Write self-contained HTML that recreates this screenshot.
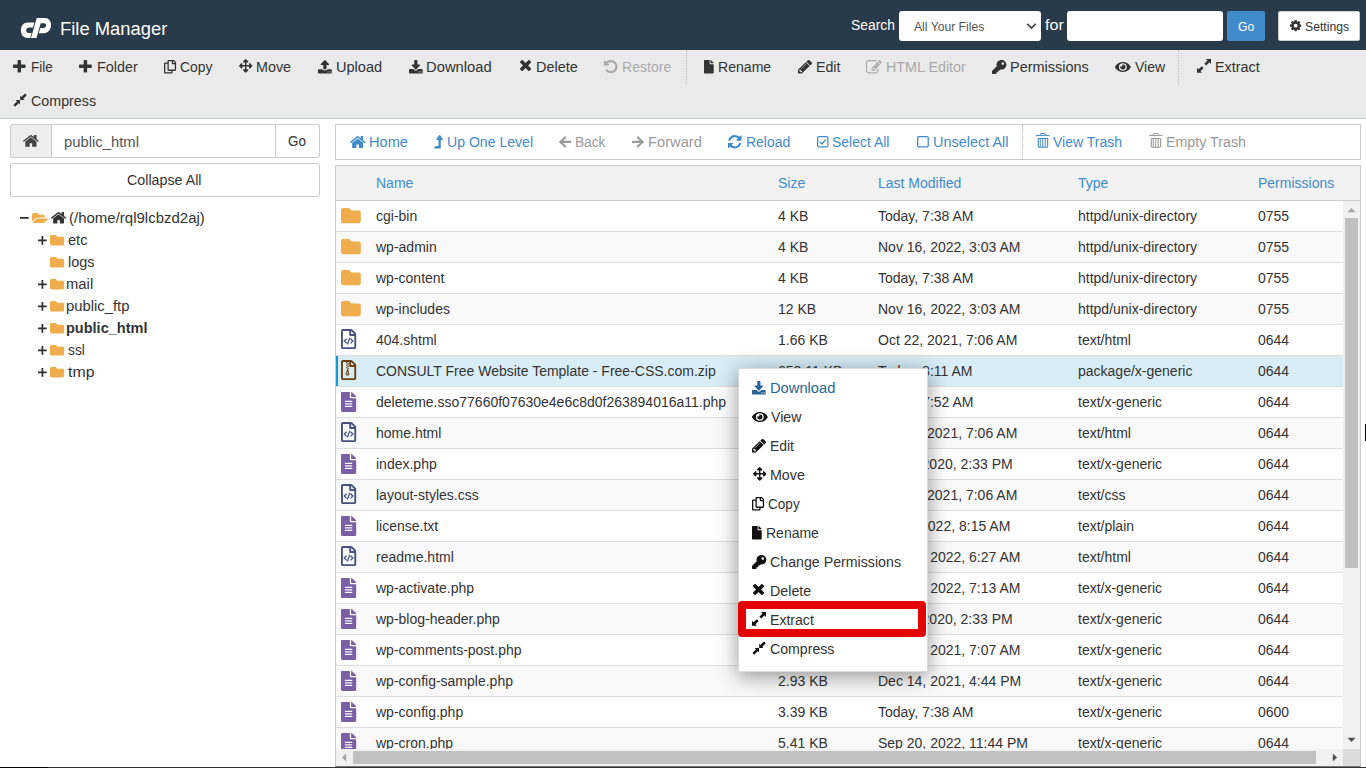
<!DOCTYPE html>
<html lang="en"><head><meta charset="utf-8"><title>cPanel File Manager</title>
<style>
html,body{margin:0;padding:0;}
body{width:1366px;height:768px;overflow:hidden;position:relative;background:#fff;font-family:"Liberation Sans",sans-serif;font-size:14px;color:#333;}
.a{position:absolute;box-sizing:border-box;}
.t{position:absolute;white-space:nowrap;line-height:20px;transform-origin:0 50%;display:block;}
svg{position:absolute;overflow:visible;}
.row{position:absolute;left:336px;width:1007px;height:30px;}
.row span{position:absolute;top:5px;line-height:20px;white-space:nowrap;font-size:14px;color:#333;}
.hd span{position:absolute;line-height:20px;white-space:nowrap;font-size:14px;color:#428bca;top:7px;}
</style></head><body>

<div class="a" style="left:0;top:0;width:1366px;height:50px;background:#293a4a"></div>
<div class="a" style="left:0;top:50px;width:1366px;height:69px;background:#eaeaea;border-bottom:1px solid #c0c8d0"></div>
<div class="a" style="left:686px;top:50px;width:0;height:34px;border-left:1px dotted #bbb"></div>
<div class="a" style="left:1178px;top:50px;width:0;height:34px;border-left:1px dotted #bbb"></div>
<div class="a" style="left:899px;top:11px;width:142px;height:30px;background:#fff;border-radius:3px"></div>
<svg style="left:1026px;top:22px" width="11" height="9" viewBox="0 0 11 9"><path d="M1.3 1.8 L5.5 6 L9.7 1.8" fill="none" stroke="#444" stroke-width="1.7"/></svg>
<div class="a" style="left:1067px;top:11px;width:156px;height:30px;background:#fff;border-radius:3px"></div>
<div class="a" style="left:1227px;top:11px;width:38px;height:30px;background:#428bca;border-radius:2px"></div>
<div class="a" style="left:1278px;top:11px;width:82px;height:30px;background:#fff;border:1px solid #ccc;border-radius:2px"></div>
<div class="a" style="left:10px;top:124px;width:310px;height:34px;background:#fff;border:1px solid #ccc;border-radius:3px"></div>
<div class="a" style="left:10px;top:124px;width:42px;height:34px;background:#eee;border:1px solid #ccc;border-radius:3px 0 0 3px"></div>
<div class="a" style="left:275px;top:124px;width:45px;height:34px;background:#fff;border:1px solid #ccc;border-radius:0 3px 3px 0"></div>
<div class="a" style="left:10px;top:163px;width:310px;height:34px;background:#fff;border:1px solid #ccc;border-radius:2px"></div>
<div class="a" style="left:335px;top:124px;width:1026px;height:36px;background:#fff;border:1px solid #ccc"></div>
<div class="a" style="left:1022px;top:125px;width:0;height:34px;border-left:1px dotted #bbb"></div>
<div class="a" style="left:335px;top:165px;width:1026px;height:602px;background:#fff;border:1px solid #ccc;border-bottom-color:#777"></div>
<div class="a hd" style="left:336px;top:166px;width:1024px;height:35px;background:#f2f2f2;border-bottom:1px solid #ccc"><span style="left:40px">Name</span><span style="left:442px">Size</span><span style="left:542px">Last Modified</span><span style="left:742px">Type</span><span style="left:922px">Permissions</span></div>
<div class="row" style="top:201px;height:30px;background:#fff;border-bottom:1px solid #ddd;box-sizing:content-box;overflow:hidden"><span style="left:40px">cgi-bin</span><span style="left:442px">4 KB</span><span style="left:542px">Today, 7:38 AM</span><span style="left:742px">httpd/unix-directory</span><span style="left:922px">0755</span><svg style="left:4.90px;top:6.80px;color:#f0ad4e" width="19.80" height="15.20" viewBox="0.0 64.0 512.0 384.0" preserveAspectRatio="none"><path d="M464 128H272l-64-64H48C21.49 64 0 85.49 0 112v288c0 26.51 21.49 48 48 48h416c26.51 0 48-21.49 48-48V176c0-26.51-21.49-48-48-48z" fill="currentColor" fill-rule="evenodd"/></svg></div>
<div class="row" style="top:232px;height:30px;background:#f9f9f9;border-bottom:1px solid #ddd;box-sizing:content-box;overflow:hidden"><span style="left:40px">wp-admin</span><span style="left:442px">4 KB</span><span style="left:542px">Nov 16, 2022, 3:03 AM</span><span style="left:742px">httpd/unix-directory</span><span style="left:922px">0755</span><svg style="left:4.90px;top:6.80px;color:#f0ad4e" width="19.80" height="15.20" viewBox="0.0 64.0 512.0 384.0" preserveAspectRatio="none"><path d="M464 128H272l-64-64H48C21.49 64 0 85.49 0 112v288c0 26.51 21.49 48 48 48h416c26.51 0 48-21.49 48-48V176c0-26.51-21.49-48-48-48z" fill="currentColor" fill-rule="evenodd"/></svg></div>
<div class="row" style="top:263px;height:30px;background:#fff;border-bottom:1px solid #ddd;box-sizing:content-box;overflow:hidden"><span style="left:40px">wp-content</span><span style="left:442px">4 KB</span><span style="left:542px">Today, 7:38 AM</span><span style="left:742px">httpd/unix-directory</span><span style="left:922px">0755</span><svg style="left:4.90px;top:6.80px;color:#f0ad4e" width="19.80" height="15.20" viewBox="0.0 64.0 512.0 384.0" preserveAspectRatio="none"><path d="M464 128H272l-64-64H48C21.49 64 0 85.49 0 112v288c0 26.51 21.49 48 48 48h416c26.51 0 48-21.49 48-48V176c0-26.51-21.49-48-48-48z" fill="currentColor" fill-rule="evenodd"/></svg></div>
<div class="row" style="top:294px;height:30px;background:#f9f9f9;border-bottom:1px solid #ddd;box-sizing:content-box;overflow:hidden"><span style="left:40px">wp-includes</span><span style="left:442px">12 KB</span><span style="left:542px">Nov 16, 2022, 3:03 AM</span><span style="left:742px">httpd/unix-directory</span><span style="left:922px">0755</span><svg style="left:4.90px;top:6.80px;color:#f0ad4e" width="19.80" height="15.20" viewBox="0.0 64.0 512.0 384.0" preserveAspectRatio="none"><path d="M464 128H272l-64-64H48C21.49 64 0 85.49 0 112v288c0 26.51 21.49 48 48 48h416c26.51 0 48-21.49 48-48V176c0-26.51-21.49-48-48-48z" fill="currentColor" fill-rule="evenodd"/></svg></div>
<div class="row" style="top:325px;height:30px;background:#fff;border-bottom:1px solid #ddd;box-sizing:content-box;overflow:hidden"><span style="left:40px">404.shtml</span><span style="left:442px">1.66 KB</span><span style="left:542px">Oct 22, 2021, 7:06 AM</span><span style="left:742px">text/html</span><span style="left:922px">0644</span><svg style="left:4.90px;top:4.30px;color:#47527d" width="15.20" height="20.10" viewBox="0 0 384 512" preserveAspectRatio="none"><path d="M369.9 97.9L286 14C277 5 264.8-.1 252.1-.1H48C21.5 0 0 21.5 0 48v416c0 26.5 21.5 48 48 48h288c26.5 0 48-21.5 48-48V131.900c0-12.7-5.1-25-14.1-34zM332.1 128H256V51.900l76.100 76.100zM48 464V48h160v104c0 13.3 10.7 24 24 24h104v288H48z" fill="currentColor"/><path d="M142 250L84 308L142 366M242 250L300 308L242 366M222 226L162 392" fill="none" stroke="currentColor" stroke-width="34"/></svg></div>
<div class="row" style="top:356px;height:30px;background:#d9edf7;border-bottom:1px solid #ddd;box-sizing:content-box;overflow:hidden"><span style="left:40px">CONSULT Free Website Template - Free-CSS.com.zip</span><span style="left:442px">653.11 KB</span><span style="left:542px">Today, 8:11 AM</span><span style="left:742px">package/x-generic</span><span style="left:922px">0644</span><svg style="left:4.90px;top:4.30px;color:#6e4010" width="15.20" height="20.10" viewBox="0 0 384 512" preserveAspectRatio="none"><path d="M369.9 97.9L286 14C277 5 264.8-.1 252.1-.1H48C21.5 0 0 21.5 0 48v416c0 26.5 21.5 48 48 48h288c26.5 0 48-21.5 48-48V131.900c0-12.7-5.1-25-14.1-34zM332.1 128H256V51.900l76.100 76.100zM48 464V48h160v104c0 13.3 10.7 24 24 24h104v288H48z" fill="currentColor"/><path d="M128 48h36v32h-36zM164 80h36v32h-36zM128 112h36v32h-36zM164 144h36v32h-36zM128 176h36v32h-36zM164 208h36v32h-36z" fill="currentColor"/><path d="M164 250L124 360A44 44 0 0 0 204 360Z" fill="none" stroke="currentColor" stroke-width="26"/><circle cx="164" cy="352" r="16" fill="currentColor"/></svg></div>
<div class="row" style="top:387px;height:30px;background:#fff;border-bottom:1px solid #ddd;box-sizing:content-box;overflow:hidden"><span style="left:40px">deleteme.sso77660f07630e4e6c8d0f263894016a11.php</span><span style="left:442px">0 bytes</span><span style="left:542px">Today, 7:52 AM</span><span style="left:742px">text/x-generic</span><span style="left:922px">0644</span><svg style="left:4.90px;top:4.50px;color:#7b5fa5" width="15.20" height="20.00" viewBox="0.0 0.0 384.0 512.0" preserveAspectRatio="none"><path d="M224 136V0H24C10.7 0 0 10.7 0 24v464c0 13.3 10.7 24 24 24h336c13.3 0 24-10.7 24-24V160H248c-13.2 0-24-10.8-24-24zm64 236c0 6.6-5.4 12-12 12H108c-6.6 0-12-5.4-12-12v-8c0-6.6 5.4-12 12-12h168c6.6 0 12 5.4 12 12v8zm0-64c0 6.6-5.4 12-12 12H108c-6.6 0-12-5.4-12-12v-8c0-6.6 5.4-12 12-12h168c6.6 0 12 5.4 12 12v8zm0-72v8c0 6.6-5.4 12-12 12H108c-6.6 0-12-5.4-12-12v-8c0-6.6 5.4-12 12-12h168c6.6 0 12 5.4 12 12zm96-114.1v6.1H256V0h6.1c6.4 0 12.5 2.5 17 7l97.900 98c4.5 4.5 7 10.6 7 16.900z" fill="currentColor" fill-rule="evenodd"/></svg></div>
<div class="row" style="top:418px;height:30px;background:#f9f9f9;border-bottom:1px solid #ddd;box-sizing:content-box;overflow:hidden"><span style="left:40px">home.html</span><span style="left:442px">1.66 KB</span><span style="left:542px">Oct 22, 2021, 7:06 AM</span><span style="left:742px">text/html</span><span style="left:922px">0644</span><svg style="left:4.90px;top:4.30px;color:#47527d" width="15.20" height="20.10" viewBox="0 0 384 512" preserveAspectRatio="none"><path d="M369.9 97.9L286 14C277 5 264.8-.1 252.1-.1H48C21.5 0 0 21.5 0 48v416c0 26.5 21.5 48 48 48h288c26.5 0 48-21.5 48-48V131.900c0-12.7-5.1-25-14.1-34zM332.1 128H256V51.900l76.100 76.100zM48 464V48h160v104c0 13.3 10.7 24 24 24h104v288H48z" fill="currentColor"/><path d="M142 250L84 308L142 366M242 250L300 308L242 366M222 226L162 392" fill="none" stroke="currentColor" stroke-width="34"/></svg></div>
<div class="row" style="top:449px;height:30px;background:#fff;border-bottom:1px solid #ddd;box-sizing:content-box;overflow:hidden"><span style="left:40px">index.php</span><span style="left:442px">405 bytes</span><span style="left:542px">Feb 6, 2020, 2:33 PM</span><span style="left:742px">text/x-generic</span><span style="left:922px">0644</span><svg style="left:4.90px;top:4.50px;color:#7b5fa5" width="15.20" height="20.00" viewBox="0.0 0.0 384.0 512.0" preserveAspectRatio="none"><path d="M224 136V0H24C10.7 0 0 10.7 0 24v464c0 13.3 10.7 24 24 24h336c13.3 0 24-10.7 24-24V160H248c-13.2 0-24-10.8-24-24zm64 236c0 6.6-5.4 12-12 12H108c-6.6 0-12-5.4-12-12v-8c0-6.6 5.4-12 12-12h168c6.6 0 12 5.4 12 12v8zm0-64c0 6.6-5.4 12-12 12H108c-6.6 0-12-5.4-12-12v-8c0-6.6 5.4-12 12-12h168c6.6 0 12 5.4 12 12v8zm0-72v8c0 6.6-5.4 12-12 12H108c-6.6 0-12-5.4-12-12v-8c0-6.6 5.4-12 12-12h168c6.6 0 12 5.4 12 12zm96-114.1v6.1H256V0h6.1c6.4 0 12.5 2.5 17 7l97.900 98c4.5 4.5 7 10.6 7 16.900z" fill="currentColor" fill-rule="evenodd"/></svg></div>
<div class="row" style="top:480px;height:30px;background:#f9f9f9;border-bottom:1px solid #ddd;box-sizing:content-box;overflow:hidden"><span style="left:40px">layout-styles.css</span><span style="left:442px">3.84 KB</span><span style="left:542px">Oct 22, 2021, 7:06 AM</span><span style="left:742px">text/css</span><span style="left:922px">0644</span><svg style="left:4.90px;top:4.30px;color:#47527d" width="15.20" height="20.10" viewBox="0 0 384 512" preserveAspectRatio="none"><path d="M369.9 97.9L286 14C277 5 264.8-.1 252.1-.1H48C21.5 0 0 21.5 0 48v416c0 26.5 21.5 48 48 48h288c26.5 0 48-21.5 48-48V131.900c0-12.7-5.1-25-14.1-34zM332.1 128H256V51.900l76.100 76.100zM48 464V48h160v104c0 13.3 10.7 24 24 24h104v288H48z" fill="currentColor"/><path d="M142 250L84 308L142 366M242 250L300 308L242 366M222 226L162 392" fill="none" stroke="currentColor" stroke-width="34"/></svg></div>
<div class="row" style="top:511px;height:30px;background:#fff;border-bottom:1px solid #ddd;box-sizing:content-box;overflow:hidden"><span style="left:40px">license.txt</span><span style="left:442px">19.45 KB</span><span style="left:542px">Jan 1, 2022, 8:15 AM</span><span style="left:742px">text/plain</span><span style="left:922px">0644</span><svg style="left:4.90px;top:4.50px;color:#7b5fa5" width="15.20" height="20.00" viewBox="0.0 0.0 384.0 512.0" preserveAspectRatio="none"><path d="M224 136V0H24C10.7 0 0 10.7 0 24v464c0 13.3 10.7 24 24 24h336c13.3 0 24-10.7 24-24V160H248c-13.2 0-24-10.8-24-24zm64 236c0 6.6-5.4 12-12 12H108c-6.6 0-12-5.4-12-12v-8c0-6.6 5.4-12 12-12h168c6.6 0 12 5.4 12 12v8zm0-64c0 6.6-5.4 12-12 12H108c-6.6 0-12-5.4-12-12v-8c0-6.6 5.4-12 12-12h168c6.6 0 12 5.4 12 12v8zm0-72v8c0 6.6-5.4 12-12 12H108c-6.6 0-12-5.4-12-12v-8c0-6.6 5.4-12 12-12h168c6.6 0 12 5.4 12 12zm96-114.1v6.1H256V0h6.1c6.4 0 12.5 2.5 17 7l97.900 98c4.5 4.5 7 10.6 7 16.900z" fill="currentColor" fill-rule="evenodd"/></svg></div>
<div class="row" style="top:542px;height:30px;background:#f9f9f9;border-bottom:1px solid #ddd;box-sizing:content-box;overflow:hidden"><span style="left:40px">readme.html</span><span style="left:442px">7.23 KB</span><span style="left:542px">Nov 16, 2022, 6:27 AM</span><span style="left:742px">text/html</span><span style="left:922px">0644</span><svg style="left:4.90px;top:4.30px;color:#47527d" width="15.20" height="20.10" viewBox="0 0 384 512" preserveAspectRatio="none"><path d="M369.9 97.9L286 14C277 5 264.8-.1 252.1-.1H48C21.5 0 0 21.5 0 48v416c0 26.5 21.5 48 48 48h288c26.5 0 48-21.5 48-48V131.900c0-12.7-5.1-25-14.1-34zM332.1 128H256V51.900l76.100 76.100zM48 464V48h160v104c0 13.3 10.7 24 24 24h104v288H48z" fill="currentColor"/><path d="M142 250L84 308L142 366M242 250L300 308L242 366M222 226L162 392" fill="none" stroke="currentColor" stroke-width="34"/></svg></div>
<div class="row" style="top:573px;height:30px;background:#fff;border-bottom:1px solid #ddd;box-sizing:content-box;overflow:hidden"><span style="left:40px">wp-activate.php</span><span style="left:442px">7.04 KB</span><span style="left:542px">Sep 17, 2022, 7:13 AM</span><span style="left:742px">text/x-generic</span><span style="left:922px">0644</span><svg style="left:4.90px;top:4.50px;color:#7b5fa5" width="15.20" height="20.00" viewBox="0.0 0.0 384.0 512.0" preserveAspectRatio="none"><path d="M224 136V0H24C10.7 0 0 10.7 0 24v464c0 13.3 10.7 24 24 24h336c13.3 0 24-10.7 24-24V160H248c-13.2 0-24-10.8-24-24zm64 236c0 6.6-5.4 12-12 12H108c-6.6 0-12-5.4-12-12v-8c0-6.6 5.4-12 12-12h168c6.6 0 12 5.4 12 12v8zm0-64c0 6.6-5.4 12-12 12H108c-6.6 0-12-5.4-12-12v-8c0-6.6 5.4-12 12-12h168c6.6 0 12 5.4 12 12v8zm0-72v8c0 6.6-5.4 12-12 12H108c-6.6 0-12-5.4-12-12v-8c0-6.6 5.4-12 12-12h168c6.6 0 12 5.4 12 12zm96-114.1v6.1H256V0h6.1c6.4 0 12.5 2.5 17 7l97.900 98c4.5 4.5 7 10.6 7 16.900z" fill="currentColor" fill-rule="evenodd"/></svg></div>
<div class="row" style="top:604px;height:30px;background:#f9f9f9;border-bottom:1px solid #ddd;box-sizing:content-box;overflow:hidden"><span style="left:40px">wp-blog-header.php</span><span style="left:442px">351 bytes</span><span style="left:542px">Feb 6, 2020, 2:33 PM</span><span style="left:742px">text/x-generic</span><span style="left:922px">0644</span><svg style="left:4.90px;top:4.50px;color:#7b5fa5" width="15.20" height="20.00" viewBox="0.0 0.0 384.0 512.0" preserveAspectRatio="none"><path d="M224 136V0H24C10.7 0 0 10.7 0 24v464c0 13.3 10.7 24 24 24h336c13.3 0 24-10.7 24-24V160H248c-13.2 0-24-10.8-24-24zm64 236c0 6.6-5.4 12-12 12H108c-6.6 0-12-5.4-12-12v-8c0-6.6 5.4-12 12-12h168c6.6 0 12 5.4 12 12v8zm0-64c0 6.6-5.4 12-12 12H108c-6.6 0-12-5.4-12-12v-8c0-6.6 5.4-12 12-12h168c6.6 0 12 5.4 12 12v8zm0-72v8c0 6.6-5.4 12-12 12H108c-6.6 0-12-5.4-12-12v-8c0-6.6 5.4-12 12-12h168c6.6 0 12 5.4 12 12zm96-114.1v6.1H256V0h6.1c6.4 0 12.5 2.5 17 7l97.900 98c4.5 4.5 7 10.6 7 16.900z" fill="currentColor" fill-rule="evenodd"/></svg></div>
<div class="row" style="top:635px;height:30px;background:#fff;border-bottom:1px solid #ddd;box-sizing:content-box;overflow:hidden"><span style="left:40px">wp-comments-post.php</span><span style="left:442px">2.28 KB</span><span style="left:542px">Nov 10, 2021, 7:07 AM</span><span style="left:742px">text/x-generic</span><span style="left:922px">0644</span><svg style="left:4.90px;top:4.50px;color:#7b5fa5" width="15.20" height="20.00" viewBox="0.0 0.0 384.0 512.0" preserveAspectRatio="none"><path d="M224 136V0H24C10.7 0 0 10.7 0 24v464c0 13.3 10.7 24 24 24h336c13.3 0 24-10.7 24-24V160H248c-13.2 0-24-10.8-24-24zm64 236c0 6.6-5.4 12-12 12H108c-6.6 0-12-5.4-12-12v-8c0-6.6 5.4-12 12-12h168c6.6 0 12 5.4 12 12v8zm0-64c0 6.6-5.4 12-12 12H108c-6.6 0-12-5.4-12-12v-8c0-6.6 5.4-12 12-12h168c6.6 0 12 5.4 12 12v8zm0-72v8c0 6.6-5.4 12-12 12H108c-6.6 0-12-5.4-12-12v-8c0-6.6 5.4-12 12-12h168c6.6 0 12 5.4 12 12zm96-114.1v6.1H256V0h6.1c6.4 0 12.5 2.5 17 7l97.900 98c4.5 4.5 7 10.6 7 16.900z" fill="currentColor" fill-rule="evenodd"/></svg></div>
<div class="row" style="top:666px;height:30px;background:#f9f9f9;border-bottom:1px solid #ddd;box-sizing:content-box;overflow:hidden"><span style="left:40px">wp-config-sample.php</span><span style="left:442px">2.93 KB</span><span style="left:542px">Dec 14, 2021, 4:44 PM</span><span style="left:742px">text/x-generic</span><span style="left:922px">0644</span><svg style="left:4.90px;top:4.50px;color:#7b5fa5" width="15.20" height="20.00" viewBox="0.0 0.0 384.0 512.0" preserveAspectRatio="none"><path d="M224 136V0H24C10.7 0 0 10.7 0 24v464c0 13.3 10.7 24 24 24h336c13.3 0 24-10.7 24-24V160H248c-13.2 0-24-10.8-24-24zm64 236c0 6.6-5.4 12-12 12H108c-6.6 0-12-5.4-12-12v-8c0-6.6 5.4-12 12-12h168c6.6 0 12 5.4 12 12v8zm0-64c0 6.6-5.4 12-12 12H108c-6.6 0-12-5.4-12-12v-8c0-6.6 5.4-12 12-12h168c6.6 0 12 5.4 12 12v8zm0-72v8c0 6.6-5.4 12-12 12H108c-6.6 0-12-5.4-12-12v-8c0-6.6 5.4-12 12-12h168c6.6 0 12 5.4 12 12zm96-114.1v6.1H256V0h6.1c6.4 0 12.5 2.5 17 7l97.900 98c4.5 4.5 7 10.6 7 16.900z" fill="currentColor" fill-rule="evenodd"/></svg></div>
<div class="row" style="top:697px;height:30px;background:#fff;border-bottom:1px solid #ddd;box-sizing:content-box;overflow:hidden"><span style="left:40px">wp-config.php</span><span style="left:442px">3.39 KB</span><span style="left:542px">Today, 7:38 AM</span><span style="left:742px">text/x-generic</span><span style="left:922px">0600</span><svg style="left:4.90px;top:4.50px;color:#7b5fa5" width="15.20" height="20.00" viewBox="0.0 0.0 384.0 512.0" preserveAspectRatio="none"><path d="M224 136V0H24C10.7 0 0 10.7 0 24v464c0 13.3 10.7 24 24 24h336c13.3 0 24-10.7 24-24V160H248c-13.2 0-24-10.8-24-24zm64 236c0 6.6-5.4 12-12 12H108c-6.6 0-12-5.4-12-12v-8c0-6.6 5.4-12 12-12h168c6.6 0 12 5.4 12 12v8zm0-64c0 6.6-5.4 12-12 12H108c-6.6 0-12-5.4-12-12v-8c0-6.6 5.4-12 12-12h168c6.6 0 12 5.4 12 12v8zm0-72v8c0 6.6-5.4 12-12 12H108c-6.6 0-12-5.4-12-12v-8c0-6.6 5.4-12 12-12h168c6.6 0 12 5.4 12 12zm96-114.1v6.1H256V0h6.1c6.4 0 12.5 2.5 17 7l97.900 98c4.5 4.5 7 10.6 7 16.900z" fill="currentColor" fill-rule="evenodd"/></svg></div>
<div class="row" style="top:728px;height:21px;background:#f9f9f9;border-bottom:1px solid #ddd;box-sizing:content-box;overflow:hidden"><span style="left:40px">wp-cron.php</span><span style="left:442px">5.41 KB</span><span style="left:542px">Sep 20, 2022, 11:44 PM</span><span style="left:742px">text/x-generic</span><span style="left:922px">0644</span><svg style="left:4.90px;top:4.50px;color:#7b5fa5" width="15.20" height="20.00" viewBox="0.0 0.0 384.0 512.0" preserveAspectRatio="none"><path d="M224 136V0H24C10.7 0 0 10.7 0 24v464c0 13.3 10.7 24 24 24h336c13.3 0 24-10.7 24-24V160H248c-13.2 0-24-10.8-24-24zm64 236c0 6.6-5.4 12-12 12H108c-6.6 0-12-5.4-12-12v-8c0-6.6 5.4-12 12-12h168c6.6 0 12 5.4 12 12v8zm0-64c0 6.6-5.4 12-12 12H108c-6.6 0-12-5.4-12-12v-8c0-6.6 5.4-12 12-12h168c6.6 0 12 5.4 12 12v8zm0-72v8c0 6.6-5.4 12-12 12H108c-6.6 0-12-5.4-12-12v-8c0-6.6 5.4-12 12-12h168c6.6 0 12 5.4 12 12zm96-114.1v6.1H256V0h6.1c6.4 0 12.5 2.5 17 7l97.900 98c4.5 4.5 7 10.6 7 16.900z" fill="currentColor" fill-rule="evenodd"/></svg></div>
<div class="a" style="left:336px;top:356px;width:2px;height:30px;background:#1997d4"></div>
<div class="a" style="left:1343px;top:201px;width:17px;height:548px;background:#f1f1f1"></div>
<div class="a" style="left:1345px;top:218px;width:13px;height:350px;background:#c1c1c1"></div>
<svg style="left:1347px;top:207px" width="9" height="6" viewBox="0 0 9 6"><path d="M0.5 5.2 L4.5 1 L8.5 5.2Z" fill="#a3a3a3"/></svg>
<svg style="left:1347px;top:737px" width="9" height="6" viewBox="0 0 9 6"><path d="M0.5 0.8 L4.5 5 L8.5 0.8Z" fill="#505050"/></svg>
<div class="a" style="left:336px;top:749px;width:1007px;height:17px;background:#f1f1f1"></div>
<div class="a" style="left:353px;top:751px;width:963px;height:13px;background:#c1c1c1"></div>
<svg style="left:341px;top:753px" width="6" height="9" viewBox="0 0 6 9"><path d="M5.2 0.5 L1 4.5 L5.2 8.5Z" fill="#a3a3a3"/></svg>
<svg style="left:1332px;top:753px" width="6" height="9" viewBox="0 0 6 9"><path d="M0.8 0.5 L5 4.5 L0.8 8.5Z" fill="#505050"/></svg>
<div class="a" style="left:1343px;top:749px;width:17px;height:17px;background:#dcdcdc"></div>
<div class="a" style="left:0;top:767px;width:1366px;height:1px;background:#333"></div>
<div class="a" style="left:0;top:767px;width:48px;height:1px;background:#000"></div>
<div class="a" style="left:1365px;top:424px;width:1px;height:17px;background:#000"></div>
<span class="t" style="left:60.2px;top:19.0px;font-size:18px;color:#fff;font-weight:400;transform:scaleX(1.0216)" id="t0">File Manager</span>
<span class="t" style="left:851.1px;top:15.0px;font-size:14px;color:#fff;font-weight:400;transform:scaleX(0.9892)" id="t1">Search</span>
<span class="t" style="left:913.7px;top:16.5px;font-size:13px;color:#555;font-weight:400;transform:scaleX(0.9343)" id="t2">All Your Files</span>
<span class="t" style="left:1044.6px;top:15.0px;font-size:14px;color:#fff;font-weight:400;transform:scaleX(1.1527)" id="t3">for</span>
<span class="t" style="left:1237.5px;top:16.5px;font-size:13px;color:#fff;font-weight:400;transform:scaleX(0.9334)" id="t4">Go</span>
<span class="t" style="left:1304.5px;top:16.5px;font-size:13px;color:#333;font-weight:400;transform:scaleX(0.9384)" id="t5">Settings</span>
<span class="t" style="left:30.9px;top:57.0px;font-size:14px;color:#333;font-weight:400;transform:scaleX(0.9627)" id="t6">File</span>
<span class="t" style="left:96.7px;top:57.0px;font-size:14px;color:#333;font-weight:400;transform:scaleX(1.0254)" id="t7">Folder</span>
<span class="t" style="left:179.9px;top:57.0px;font-size:14px;color:#333;font-weight:400;transform:scaleX(0.9911)" id="t8">Copy</span>
<span class="t" style="left:256.2px;top:57.0px;font-size:14px;color:#333;font-weight:400;transform:scaleX(1.0225)" id="t9">Move</span>
<span class="t" style="left:335.9px;top:57.0px;font-size:14px;color:#333;font-weight:400;transform:scaleX(1.0388)" id="t10">Upload</span>
<span class="t" style="left:426.0px;top:57.0px;font-size:14px;color:#333;font-weight:400;transform:scaleX(1.0558)" id="t11">Download</span>
<span class="t" style="left:536.1px;top:57.0px;font-size:14px;color:#333;font-weight:400;transform:scaleX(1.0331)" id="t12">Delete</span>
<span class="t" style="left:622.0px;top:57.0px;font-size:14px;color:#aaa;font-weight:400;transform:scaleX(1.0041)" id="t13">Restore</span>
<span class="t" style="left:717.9px;top:57.0px;font-size:14px;color:#333;font-weight:400;transform:scaleX(1.0053)" id="t14">Rename</span>
<span class="t" style="left:815.5px;top:57.0px;font-size:14px;color:#333;font-weight:400;transform:scaleX(1.0145)" id="t15">Edit</span>
<span class="t" style="left:885.9px;top:57.0px;font-size:14px;color:#aaa;font-weight:400;transform:scaleX(1.0224)" id="t16">HTML Editor</span>
<span class="t" style="left:1009.8px;top:57.0px;font-size:14px;color:#333;font-weight:400;transform:scaleX(1.0337)" id="t17">Permissions</span>
<span class="t" style="left:1134.5px;top:57.0px;font-size:14px;color:#333;font-weight:400;transform:scaleX(1.0033)" id="t18">View</span>
<span class="t" style="left:1214.6px;top:57.0px;font-size:14px;color:#333;font-weight:400;transform:scaleX(1.0266)" id="t19">Extract</span>
<span class="t" style="left:30.9px;top:91.0px;font-size:14px;color:#333;font-weight:400;transform:scaleX(1.0193)" id="t20">Compress</span>
<span class="t" style="left:63.9px;top:132.0px;font-size:14px;color:#555;font-weight:400;transform:scaleX(1.0587)" id="t21">public_html</span>
<span class="t" style="left:288.3px;top:131.0px;font-size:14px;color:#333;font-weight:400;transform:scaleX(0.9577)" id="t22">Go</span>
<span class="t" style="left:127.3px;top:170.0px;font-size:14px;color:#333;font-weight:400;transform:scaleX(1.0185)" id="t23">Collapse All</span>
<span class="t" style="left:69.0px;top:208.0px;font-size:14px;color:#333;font-weight:400;transform:scaleX(1.0706)" id="t24">(/home/rql9lcbzd2aj)</span>
<span class="t" style="left:67.8px;top:230.0px;font-size:14px;color:#333;font-weight:400;transform:scaleX(1.0433)" id="t25">etc</span>
<span class="t" style="left:67.8px;top:252.0px;font-size:14px;color:#333;font-weight:400;transform:scaleX(1.0315)" id="t26">logs</span>
<span class="t" style="left:66.0px;top:274.0px;font-size:14px;color:#333;font-weight:400;transform:scaleX(1.0588)" id="t27">mail</span>
<span class="t" style="left:66.0px;top:296.0px;font-size:14px;color:#333;font-weight:400;transform:scaleX(1.0581)" id="t28">public_ftp</span>
<span class="t" style="left:66.0px;top:318.0px;font-size:14px;color:#333;font-weight:700;transform:scaleX(1.0364)" id="t29">public_html</span>
<span class="t" style="left:67.8px;top:340.0px;font-size:14px;color:#333;font-weight:400;transform:scaleX(0.9836)" id="t30">ssl</span>
<span class="t" style="left:67.8px;top:362.0px;font-size:14px;color:#333;font-weight:400;transform:scaleX(1.1369)" id="t31">tmp</span>
<span class="t" style="left:369.0px;top:132.0px;font-size:14px;color:#428bca;font-weight:400;transform:scaleX(1.0433)" id="t32">Home</span>
<span class="t" style="left:446.8px;top:132.0px;font-size:14px;color:#428bca;font-weight:400;transform:scaleX(1.0046)" id="t33">Up One Level</span>
<span class="t" style="left:574.9px;top:132.0px;font-size:14px;color:#999;font-weight:400;transform:scaleX(0.9769)" id="t34">Back</span>
<span class="t" style="left:647.6px;top:132.0px;font-size:14px;color:#999;font-weight:400;transform:scaleX(1.0490)" id="t35">Forward</span>
<span class="t" style="left:745.6px;top:132.0px;font-size:14px;color:#428bca;font-weight:400;transform:scaleX(0.9982)" id="t36">Reload</span>
<span class="t" style="left:832.3px;top:132.0px;font-size:14px;color:#428bca;font-weight:400;transform:scaleX(0.9981)" id="t37">Select All</span>
<span class="t" style="left:932.7px;top:132.0px;font-size:14px;color:#428bca;font-weight:400;transform:scaleX(1.0321)" id="t38">Unselect All</span>
<span class="t" style="left:1052.9px;top:132.0px;font-size:14px;color:#428bca;font-weight:400;transform:scaleX(1.0026)" id="t39">View Trash</span>
<span class="t" style="left:1166.3px;top:132.0px;font-size:14px;color:#999;font-weight:400;transform:scaleX(1.0177)" id="t40">Empty Trash</span>
<svg style="left:14.00px;top:10.00px;color:#fff" width="50.00" height="32.00" viewBox="0 0 1200 768" preserveAspectRatio="none"><path d="M490 300H335C230 300 165 385 165 490C165 595 235 670 330 670H390L425 550H352C312 550 290 520 292 486C295 446 322 420 362 420H455Z" fill="#fff"/><path d="M545 190H740C840 190 892 270 890 362C888 470 818 555 720 555H594L630 434H702C745 434 770 402 770 372C770 342 750 320 720 320H640L540 670H408Z" fill="#fff"/></svg>
<svg style="left:1289.85px;top:20.35px;color:#333" width="11.30" height="11.30" viewBox="128.0 128.0 1536.0 1536.0" preserveAspectRatio="none"><path d="M1152 896q0-106-75-181t-181-75-181 75-75 181 75 181 181 75 181-75 75-181zm512-109v222q0 12-8 23t-20 13l-185 28q-19 54-39 91 35 50 107 138 10 12 10 25t-9 23q-27 37-99 108t-94 71q-12 0-26-9l-138-108q-44 23-91 38-16 136-29 186-7 28-36 28h-222q-14 0-24.5-8.5t-11.5-21.5l-28-184q-49-16-90-37l-141 107q-10 9-25 9-14 0-25-11-126-114-165-168-7-10-7-23 0-12 8-23 15-21 51-66.5t54-70.5q-27-50-41-99l-183-27q-13-2-21-12.5t-8-23.5v-222q0-12 8-23t19-13l186-28q14-46 39-92-40-57-107-138-10-12-10-24 0-10 9-23 26-36 98.5-107.5t94.500-71.5q13 0 26 10l138 107q44-23 91-38 16-136 29-186 7-28 36-28h222q14 0 24.5 8.5t11.5 21.5l28 184q49 16 90 37l142-107q9-9 24-9 13 0 25 10 129 119 165 170 7 8 7 22 0 12-8 23-15 21-51 66.5t-54 70.5q26 50 41 98l183 28q13 2 21 12.5t8 23.500z" fill="currentColor" fill-rule="evenodd"/></svg>
<svg style="left:13.15px;top:60.35px;color:#333" width="12.60" height="12.40" viewBox="0.0 192.0 1408.0 1408.0" preserveAspectRatio="none"><path d="M1408 800v192q0 40-28 68t-68 28h-416v416q0 40-28 68t-68 28h-192q-40 0-68-28t-28-68v-416h-416q-40 0-68-28t-28-68v-192q0-40 28-68t68-28h416v-416q0-40 28-68t68-28h192q40 0 68 28t28 68v416h416q40 0 68 28t28 68z" fill="currentColor" fill-rule="evenodd"/></svg>
<svg style="left:78.85px;top:60.35px;color:#333" width="12.80" height="12.40" viewBox="0.0 192.0 1408.0 1408.0" preserveAspectRatio="none"><path d="M1408 800v192q0 40-28 68t-68 28h-416v416q0 40-28 68t-68 28h-192q-40 0-68-28t-28-68v-416h-416q-40 0-68-28t-28-68v-192q0-40 28-68t68-28h416v-416q0-40 28-68t68-28h192q40 0 68 28t28 68v416h416q40 0 68 28t28 68z" fill="currentColor" fill-rule="evenodd"/></svg>
<svg style="left:163.85px;top:60.25px;color:#333" width="12.10" height="13.40" viewBox="0.0 0.0 448.0 512.0" preserveAspectRatio="none"><path d="M433.941 65.941l-51.882-51.882A48 48 0 0 0 348.118 0H176c-26.51 0-48 21.49-48 48v48H48c-26.51 0-48 21.49-48 48v320c0 26.51 21.49 48 48 48h224c26.51 0 48-21.49 48-48v-48h80c26.51 0 48-21.49 48-48V99.882a48 48 0 0 0-14.059-33.941zM266 464H54a6 6 0 0 1-6-6V150a6 6 0 0 1 6-6h74v224c0 26.51 21.49 48 48 48h96v42a6 6 0 0 1-6 6zm128-96H182a6 6 0 0 1-6-6V54a6 6 0 0 1 6-6h106v88c0 13.255 10.745 24 24 24h88v202a6 6 0 0 1-6 6zm6-256h-64V48h9.632c1.591 0 3.117.632 4.243 1.757l48.368 48.368a6 6 0 0 1 1.757 4.243V112z" fill="currentColor" fill-rule="evenodd"/></svg>
<svg style="left:238.55px;top:59.15px;color:#333" width="13.40" height="13.70" viewBox="-0.0 -0.0 512.0 512.0" preserveAspectRatio="none"><path d="M352.201 425.775l-79.196 79.196c-9.373 9.373-24.568 9.373-33.941 0l-79.196-79.196c-15.119-15.119-4.411-40.971 16.971-40.97h51.162L228 284H127.196v51.162c0 21.382-25.851 32.09-40.971 16.971L7.029 272.937c-9.373-9.373-9.373-24.569 0-33.941L86.225 159.8c15.119-15.119 40.971-4.411 40.971 16.971V228H228V127.196h-51.23c-21.382 0-32.09-25.851-16.971-40.971l79.196-79.196c9.373-9.373 24.568-9.373 33.941 0l79.196 79.196c15.119 15.119 4.411 40.971-16.971 40.971h-51.162V228h100.804v-51.162c0-21.382 25.851-32.09 40.97-16.971l79.196 79.196c9.373 9.373 9.373 24.569 0 33.941L425.773 352.2c-15.119 15.119-40.971 4.411-40.97-16.971V284H284v100.804h51.23c21.382 0 32.09 25.851 16.971 40.971z" fill="currentColor" fill-rule="evenodd"/></svg>
<svg style="left:318.05px;top:60.15px;color:#333" width="13.80" height="13.60" viewBox="0.0 64.0 1664.0 1600.0" preserveAspectRatio="none"><path d="M1280 1472q0-26-19-45t-45-19-45 19-19 45 19 45 45 19 45-19 19-45zm256 0q0-26-19-45t-45-19-45 19-19 45 19 45 45 19 45-19 19-45zm128-224v320q0 40-28 68t-68 28h-1472q-40 0-68-28t-28-68v-320q0-40 28-68t68-28h427q21 56 70.5 92t110.5 36h256q61 0 110.5-36t70.5-92h427q40 0 68 28t28 68zm-325-648q-17 40-59 40h-256v448q0 26-19 45t-45 19h-256q-26 0-45-19t-19-45v-448h-256q-42 0-59-40-17-39 14-69l448-448q18-19 45-19t45 19l448 448q31 30 14 69z" fill="currentColor" fill-rule="evenodd"/></svg>
<svg style="left:408.85px;top:60.15px;color:#333" width="13.70" height="13.60" viewBox="0.0 0.0 1664.0 1536.0" preserveAspectRatio="none"><path d="M1280 1344q0-26-19-45t-45-19-45 19-19 45 19 45 45 19 45-19 19-45zm256 0q0-26-19-45t-45-19-45 19-19 45 19 45 45 19 45-19 19-45zm128-224v320q0 40-28 68t-68 28h-1472q-40 0-68-28t-28-68v-320q0-40 28-68t68-28h465l135 136q58 56 136 56t136-56l136-136h464q40 0 68 28t28 68zm-325-569q17 41-14 70l-448 448q-18 19-45 19t-45-19l-448-448q-31-29-14-70 17-39 59-39h256v-448q0-26 19-45t45-19h256q26 0 45 19t19 45v448h256q42 0 59 39z" fill="currentColor" fill-rule="evenodd"/></svg>
<svg style="left:519.75px;top:60.45px;color:#333" width="11.10" height="11.10" viewBox="110.0 366.0 1188.0 1188.0" preserveAspectRatio="none"><path d="M1298 1322q0 40-28 68l-136 136q-28 28-68 28t-68-28l-294-294-294 294q-28 28-68 28t-68-28l-136-136q-28-28-28-68t28-68l294-294-294-294q-28-28-28-68t28-68l136-136q28-28 68-28t68 28l294 294 294-294q28-28 68-28t68 28l136 136q28 28 28 68t-28 68l-294 294 294 294q28 28 28 68z" fill="currentColor" fill-rule="evenodd"/></svg>
<svg style="left:604.45px;top:60.15px;color:#aaa" width="13.60" height="13.10" viewBox="128.0 128.0 1536.0 1536.0" preserveAspectRatio="none"><path d="M1664 896q0 156-61 298t-164 245-245 164-298 61q-172 0-327-72.5t-264-204.5q-7-10-6.5-22.5t8.500-20.5l137-138q10-9 25-9 16 2 23 12 73 95 179 147t225 52q104 0 198.5-40.5t163.500-109.5 109.5-163.5 40.5-198.5-40.5-198.5-109.5-163.5-163.5-109.5-198.5-40.5q-98 0-188 35.5t-160 101.5l137 138q31 30 14 69-17 40-59 40h-448q-26 0-45-19t-19-45v-448q0-42 40-59 39-17 69 14l130 129q107-101 244.5-156.5t284.500-55.5q156 0 298 61t245 164 164 245 61 298z" fill="currentColor" fill-rule="evenodd"/></svg>
<svg style="left:704.05px;top:60.15px;color:#333" width="9.70" height="13.40" viewBox="0.0 0.0 384.0 512.0" preserveAspectRatio="none"><path d="M224 136V0H24C10.7 0 0 10.7 0 24v464c0 13.3 10.7 24 24 24h336c13.3 0 24-10.7 24-24V160H248c-13.2 0-24-10.8-24-24zm160-14.1v6.1H256V0h6.1c6.4 0 12.5 2.5 17 7l97.900 98c4.5 4.5 7 10.6 7 16.900z" fill="currentColor" fill-rule="evenodd"/></svg>
<svg style="left:797.75px;top:60.15px;color:#333" width="14.10" height="13.40" viewBox="0.0 149.0 1515.0 1515.0" preserveAspectRatio="none"><path d="M363 1536l91-91-235-235-91 91v107h128v128h107zm523-928q0-22-22-22-10 0-17 7l-542 542q-7 7-7 17 0 22 22 22 10 0 17-7l542-542q7-7 7-17zm-54-192l416 416-832 832h-416v-416zm683 96q0 53-37 90l-166 166-416-416 166-165q36-38 90-38 53 0 91 38l235 234q37 39 37 91z" fill="currentColor" fill-rule="evenodd"/></svg>
<svg style="left:866.25px;top:60.15px;color:#aaa" width="15.60" height="13.40" viewBox="0.0 128.0 1784.0 1408.0" preserveAspectRatio="none"><path d="M888 1184l116-116-152-152-116 116v56h96v96h56zm440-720q-16-16-33 1l-350 350q-17 17-1 33t33-1l350-350q17-17 1-33zm80 594v190q0 119-84.5 203.5t-203.5 84.5h-832q-119 0-203.5-84.5t-84.5-203.5v-832q0-119 84.5-203.5t203.500-84.5h832q63 0 117 25 15 7 18 23 3 17-9 29l-49 49q-14 14-32 8-23-6-45-6h-832q-66 0-113 47t-47 113v832q0 66 47 113t113 47h832q66 0 113-47t47-113v-126q0-13 9-22l64-64q15-15 35-7t20 29zm-96-738l288 288-672 672h-288v-288zm444 132l-92 92-288-288 92-92q28-28 68-28t68 28l152 152q28 28 28 68t-28 68z" fill="currentColor" fill-rule="evenodd"/></svg>
<svg style="left:992.05px;top:59.85px;color:#333" width="14.40" height="13.90" viewBox="0.0 -0.0 512.0 512.0" preserveAspectRatio="none"><path d="M512 176.001C512 273.203 433.202 352 336 352c-11.22 0-22.19-1.062-32.827-3.069l-24.012 27.014A23.999 23.999 0 0 1 261.223 384H224v40c0 13.255-10.745 24-24 24h-40v40c0 13.255-10.745 24-24 24H24c-13.255 0-24-10.745-24-24v-78.059c0-6.365 2.529-12.47 7.029-16.971l161.802-161.802C163.108 213.814 160 195.271 160 176 160 78.798 238.797.001 335.999 0 433.488-.001 512 78.511 512 176.001zM336 128c0 26.51 21.49 48 48 48s48-21.49 48-48-21.49-48-48-48-48 21.49-48 48z" fill="currentColor" fill-rule="evenodd"/></svg>
<svg style="left:1115.05px;top:61.65px;color:#333" width="15.70" height="10.00" viewBox="0.0 64.0 576.0 384.0" preserveAspectRatio="none"><path d="M572.52 241.4C518.29 135.59 410.93 64 288 64S57.68 135.64 3.48 241.41a32.35 32.35 0 0 0 0 29.19C57.71 376.41 165.07 448 288 448s230.32-71.64 284.52-177.41a32.35 32.35 0 0 0 0-29.19zM288 400a144 144 0 1 1 144-144 143.93 143.93 0 0 1-144 144zm0-240a95.31 95.31 0 0 0-25.31 3.79 47.85 47.85 0 0 1-66.9 66.9A95.78 95.78 0 1 0 288 160z" fill="currentColor" fill-rule="evenodd"/></svg>
<svg style="left:1196.95px;top:59.05px;color:#333" width="14.00" height="13.70" viewBox="0 0 14.4 14.4" preserveAspectRatio="none"><path d="M9.2 0H14.4V5.2Z M0 9.2V14.4H5.2Z" fill="currentColor"/><path d="M12.9 1.5L8.5 5.9M1.5 12.9L5.9 8.5" stroke="currentColor" stroke-width="2.7" fill="none"/></svg>
<svg style="left:13.90px;top:93.90px;color:#333" width="12.20" height="12.00" viewBox="0 0 12.2 12.0" preserveAspectRatio="none"><path d="M6.2 1.7V6.0H10.5Z M1.7 6.1H6.0V10.4Z" fill="currentColor"/><path d="M11.9 0.3L7.7 4.5M0.3 11.8L4.5 7.6" stroke="currentColor" stroke-width="2.5" fill="none"/></svg>
<svg style="left:23.25px;top:135.25px;color:#444" width="15.80" height="11.70" viewBox="25.9 253.0 1612.2 1283.0" preserveAspectRatio="none"><path d="M1408 992v480q0 26-19 45t-45 19h-384v-384h-256v384h-384q-26 0-45-19t-19-45v-480q0-1 .5-3t.5-3l575-474 575 474q1 2 1 6zm223-69l-62 74q-8 9-21 11h-3q-13 0-21-7l-692-577-692 577q-12 8-24 7-13-2-21-11l-62-74q-8-10-7-23.5t11-21.5l719-599q32-26 76-26t76 26l244 204v-195q0-14 9-23t23-9h192q14 0 23 9t9 23v408l219 182q10 8 11 21.5t-7 23.5z" fill="currentColor" fill-rule="evenodd"/></svg>
<svg style="left:19.90px;top:217.30px;color:#333" width="8.70" height="1.80" viewBox="0 0 8.6 1.8" preserveAspectRatio="none"><rect width="8.6" height="1.8" fill="currentColor"/></svg>
<svg style="left:31.60px;top:212.60px;color:#f0ad4e" width="15.80" height="10.10" viewBox="0.0 128.0 1879.0 1408.0" preserveAspectRatio="none"><path d="M1879 952q0 31-31 66l-336 396q-43 51-120.5 86.5t-143.5 35.500h-1088q-34 0-60.5-13t-26.5-43q0-31 31-66l336-396q43-51 120.5-86.5t143.500-35.500h1088q34 0 60.5 13t26.5 43zm-343-344v160h-832q-94 0-197 47.500t-164 119.500l-337 396-5 6q0-4-.5-12.5t-.5-12.5v-960q0-92 66-158t158-66h320q92 0 158 66t66 158v32h544q92 0 158 66t66 158z" fill="currentColor" fill-rule="evenodd"/></svg>
<svg style="left:50.55px;top:212.05px;color:#333" width="15.20" height="11.40" viewBox="25.9 253.0 1612.2 1283.0" preserveAspectRatio="none"><path d="M1408 992v480q0 26-19 45t-45 19h-384v-384h-256v384h-384q-26 0-45-19t-19-45v-480q0-1 .5-3t.5-3l575-474 575 474q1 2 1 6zm223-69l-62 74q-8 9-21 11h-3q-13 0-21-7l-692-577-692 577q-12 8-24 7-13-2-21-11l-62-74q-8-10-7-23.5t11-21.5l719-599q32-26 76-26t76 26l244 204v-195q0-14 9-23t23-9h192q14 0 23 9t9 23v408l219 182q10 8 11 21.5t-7 23.5z" fill="currentColor" fill-rule="evenodd"/></svg>
<svg style="left:37.90px;top:235.60px;color:#333" width="8.80" height="8.80" viewBox="0 0 8.8 8.8" preserveAspectRatio="none"><path d="M0 4.4H8.8M4.4 0V8.8" stroke="currentColor" stroke-width="1.8" fill="none"/></svg>
<svg style="left:49.80px;top:234.50px;color:#f0ad4e" width="14.10" height="10.40" viewBox="0.0 64.0 512.0 384.0" preserveAspectRatio="none"><path d="M464 128H272l-64-64H48C21.49 64 0 85.49 0 112v288c0 26.51 21.49 48 48 48h416c26.51 0 48-21.49 48-48V176c0-26.51-21.49-48-48-48z" fill="currentColor" fill-rule="evenodd"/></svg>
<svg style="left:49.80px;top:256.50px;color:#f0ad4e" width="14.10" height="10.40" viewBox="0.0 64.0 512.0 384.0" preserveAspectRatio="none"><path d="M464 128H272l-64-64H48C21.49 64 0 85.49 0 112v288c0 26.51 21.49 48 48 48h416c26.51 0 48-21.49 48-48V176c0-26.51-21.49-48-48-48z" fill="currentColor" fill-rule="evenodd"/></svg>
<svg style="left:37.90px;top:279.60px;color:#333" width="8.80" height="8.80" viewBox="0 0 8.8 8.8" preserveAspectRatio="none"><path d="M0 4.4H8.8M4.4 0V8.8" stroke="currentColor" stroke-width="1.8" fill="none"/></svg>
<svg style="left:49.80px;top:278.50px;color:#f0ad4e" width="14.10" height="10.40" viewBox="0.0 64.0 512.0 384.0" preserveAspectRatio="none"><path d="M464 128H272l-64-64H48C21.49 64 0 85.49 0 112v288c0 26.51 21.49 48 48 48h416c26.51 0 48-21.49 48-48V176c0-26.51-21.49-48-48-48z" fill="currentColor" fill-rule="evenodd"/></svg>
<svg style="left:37.90px;top:301.60px;color:#333" width="8.80" height="8.80" viewBox="0 0 8.8 8.8" preserveAspectRatio="none"><path d="M0 4.4H8.8M4.4 0V8.8" stroke="currentColor" stroke-width="1.8" fill="none"/></svg>
<svg style="left:49.80px;top:300.50px;color:#f0ad4e" width="14.10" height="10.40" viewBox="0.0 64.0 512.0 384.0" preserveAspectRatio="none"><path d="M464 128H272l-64-64H48C21.49 64 0 85.49 0 112v288c0 26.51 21.49 48 48 48h416c26.51 0 48-21.49 48-48V176c0-26.51-21.49-48-48-48z" fill="currentColor" fill-rule="evenodd"/></svg>
<svg style="left:37.90px;top:323.60px;color:#333" width="8.80" height="8.80" viewBox="0 0 8.8 8.8" preserveAspectRatio="none"><path d="M0 4.4H8.8M4.4 0V8.8" stroke="currentColor" stroke-width="1.8" fill="none"/></svg>
<svg style="left:49.80px;top:322.50px;color:#f0ad4e" width="14.10" height="10.40" viewBox="0.0 64.0 512.0 384.0" preserveAspectRatio="none"><path d="M464 128H272l-64-64H48C21.49 64 0 85.49 0 112v288c0 26.51 21.49 48 48 48h416c26.51 0 48-21.49 48-48V176c0-26.51-21.49-48-48-48z" fill="currentColor" fill-rule="evenodd"/></svg>
<svg style="left:37.90px;top:345.60px;color:#333" width="8.80" height="8.80" viewBox="0 0 8.8 8.8" preserveAspectRatio="none"><path d="M0 4.4H8.8M4.4 0V8.8" stroke="currentColor" stroke-width="1.8" fill="none"/></svg>
<svg style="left:49.80px;top:344.50px;color:#f0ad4e" width="14.10" height="10.40" viewBox="0.0 64.0 512.0 384.0" preserveAspectRatio="none"><path d="M464 128H272l-64-64H48C21.49 64 0 85.49 0 112v288c0 26.51 21.49 48 48 48h416c26.51 0 48-21.49 48-48V176c0-26.51-21.49-48-48-48z" fill="currentColor" fill-rule="evenodd"/></svg>
<svg style="left:37.90px;top:367.60px;color:#333" width="8.80" height="8.80" viewBox="0 0 8.8 8.8" preserveAspectRatio="none"><path d="M0 4.4H8.8M4.4 0V8.8" stroke="currentColor" stroke-width="1.8" fill="none"/></svg>
<svg style="left:49.80px;top:366.50px;color:#f0ad4e" width="14.10" height="10.40" viewBox="0.0 64.0 512.0 384.0" preserveAspectRatio="none"><path d="M464 128H272l-64-64H48C21.49 64 0 85.49 0 112v288c0 26.51 21.49 48 48 48h416c26.51 0 48-21.49 48-48V176c0-26.51-21.49-48-48-48z" fill="currentColor" fill-rule="evenodd"/></svg>
<svg style="left:349.55px;top:135.65px;color:#428bca" width="15.30" height="12.00" viewBox="25.9 253.0 1612.2 1283.0" preserveAspectRatio="none"><path d="M1408 992v480q0 26-19 45t-45 19h-384v-384h-256v384h-384q-26 0-45-19t-19-45v-480q0-1 .5-3t.5-3l575-474 575 474q1 2 1 6zm223-69l-62 74q-8 9-21 11h-3q-13 0-21-7l-692-577-692 577q-12 8-24 7-13-2-21-11l-62-74q-8-10-7-23.5t11-21.5l719-599q32-26 76-26t76 26l244 204v-195q0-14 9-23t23-9h192q14 0 23 9t9 23v408l219 182q10 8 11 21.5t-7 23.5z" fill="currentColor" fill-rule="evenodd"/></svg>
<svg style="left:434.05px;top:135.15px;color:#428bca" width="9.00" height="13.60" viewBox="383.8 129.0 1025.4 1407.0" preserveAspectRatio="none"><path d="M1402 603q-18 37-58 37h-192v864q0 14-9 23t-23 9h-704q-21 0-29-18-8-20 4-35l160-192q9-11 25-11h320v-640h-192q-40 0-58-37-17-37 9-68l320-384q18-22 49-22t49 22l320 384q27 32 9 68z" fill="currentColor" fill-rule="evenodd"/></svg>
<svg style="left:559.15px;top:135.95px;color:#999" width="12.00" height="11.80" viewBox="0 0 12.3 12.1" preserveAspectRatio="none"><path d="M1.7 6.05H12.3M7 0.8L1.4 6.05L7 11.3" stroke="currentColor" stroke-width="2.1" fill="none" stroke-linejoin="miter"/></svg>
<svg style="left:632.05px;top:135.95px;color:#999" width="12.00" height="11.80" viewBox="0 0 12.3 12.1" preserveAspectRatio="none"><path d="M10.6 6.05H0M5.3 0.8L10.9 6.05L5.3 11.3" stroke="currentColor" stroke-width="2.1" fill="none" stroke-linejoin="miter"/></svg>
<svg style="left:728.25px;top:135.25px;color:#428bca" width="13.50" height="13.50" viewBox="128.0 128.0 1536.0 1536.0" preserveAspectRatio="none"><path d="M1639 1056q0 5-1 7-64 268-268 434.5t-478 166.5q-146 0-282.5-55t-243.5-157l-129 129q-19 19-45 19t-45-19-19-45v-448q0-26 19-45t45-19h448q26 0 45 19t19 45-19 45l-137 137q71 66 161 102t187 36q134 0 250-65t186-179q11-17 53-117 8-23 30-23h192q13 0 22.500 9.5t9.500 22.5zm25-800v448q0 26-19 45t-45 19h-448q-26 0-45-19t-19-45 19-45l138-138q-148-137-349-137-134 0-250 65t-186 179q-11 17-53 117-8 23-30 23h-199q-13 0-22.5-9.5t-9.5-22.5v-7q65-268 270-434.5t480-166.5q146 0 284 55.5t245 156.5l130-129q19-19 45-19t45 19 19 45z" fill="currentColor" fill-rule="evenodd"/></svg>
<svg style="left:816.95px;top:135.95px;color:#428bca" width="11.50" height="11.40" viewBox="0 0 12 12" preserveAspectRatio="none"><rect x="0.65" y="0.65" width="10.7" height="10.7" rx="1.3" fill="none" stroke="currentColor" stroke-width="1.3"/><path d="M3 6.1L5.2 8.3L9.1 3.8" fill="none" stroke="currentColor" stroke-width="1.5"/></svg>
<svg style="left:916.75px;top:135.95px;color:#428bca" width="11.90" height="11.40" viewBox="0 0 12 12" preserveAspectRatio="none"><rect x="0.65" y="0.65" width="10.7" height="10.7" rx="1.3" fill="none" stroke="currentColor" stroke-width="1.3"/></svg>
<svg style="left:1036.25px;top:133.00px;color:#428bca" width="13.45" height="14.80" viewBox="0 0 13.45 14.8" preserveAspectRatio="none"><path d="M0 2.45H13.45M4.25 2.45V1.1Q4.25 0.5 4.85 0.5H8.75Q9.35 0.5 9.35 1.1V2.45" stroke="currentColor" stroke-width="1" fill="none"/><rect x="2.25" y="5.5" width="9.4" height="8.8" rx="0.8" stroke="currentColor" stroke-width="1.1" fill="none"/><path d="M4.25 5.5V14.3M6.8 5.5V14.3M9.25 5.5V14.3" stroke="currentColor" stroke-width="1" fill="none"/></svg>
<svg style="left:1149.45px;top:133.00px;color:#999" width="13.45" height="14.80" viewBox="0 0 13.45 14.8" preserveAspectRatio="none"><path d="M0 2.45H13.45M4.25 2.45V1.1Q4.25 0.5 4.85 0.5H8.75Q9.35 0.5 9.35 1.1V2.45" stroke="currentColor" stroke-width="1" fill="none"/><rect x="2.25" y="5.5" width="9.4" height="8.8" rx="0.8" stroke="currentColor" stroke-width="1.1" fill="none"/><path d="M4.25 5.5V14.3M6.8 5.5V14.3M9.25 5.5V14.3" stroke="currentColor" stroke-width="1" fill="none"/></svg>
<div class="a" style="left:738px;top:368px;width:190px;height:304px;background:#fff;border:1px solid rgba(0,0,0,.15);box-shadow:0 4px 20px rgba(0,0,0,.42)"></div>
<div class="a" style="left:738px;top:601px;width:188px;height:36px;border:8px solid #e40303;border-radius:4px;background:#fff"></div>
<span class="t" style="left:770.1px;top:378.0px;font-size:14px;color:#2a6496;font-weight:400;transform:scaleX(1.0493)" id="t41">Download</span>
<span class="t" style="left:771.2px;top:407.0px;font-size:14px;color:#333;font-weight:400;transform:scaleX(1.0100)" id="t42">View</span>
<span class="t" style="left:770.1px;top:436.0px;font-size:14px;color:#333;font-weight:400;transform:scaleX(0.9938)" id="t43">Edit</span>
<span class="t" style="left:770.1px;top:465.0px;font-size:14px;color:#333;font-weight:400;transform:scaleX(1.0167)" id="t44">Move</span>
<span class="t" style="left:768.4px;top:494.0px;font-size:14px;color:#333;font-weight:400;transform:scaleX(0.9697)" id="t45">Copy</span>
<span class="t" style="left:766.4px;top:523.0px;font-size:14px;color:#333;font-weight:400;transform:scaleX(0.9996)" id="t46">Rename</span>
<span class="t" style="left:770.1px;top:552.0px;font-size:14px;color:#333;font-weight:400;transform:scaleX(1.0143)" id="t47">Change Permissions</span>
<span class="t" style="left:770.1px;top:581.0px;font-size:14px;color:#333;font-weight:400;transform:scaleX(1.0183)" id="t48">Delete</span>
<span class="t" style="left:770.1px;top:610.0px;font-size:14px;color:#333;font-weight:400;transform:scaleX(1.0060)" id="t49">Extract</span>
<span class="t" style="left:770.1px;top:639.0px;font-size:14px;color:#333;font-weight:400;transform:scaleX(1.0099)" id="t50">Compress</span>
<svg style="left:752.45px;top:381.15px;color:#2a6496" width="13.70" height="13.60" viewBox="0.0 0.0 1664.0 1536.0" preserveAspectRatio="none"><path d="M1280 1344q0-26-19-45t-45-19-45 19-19 45 19 45 45 19 45-19 19-45zm256 0q0-26-19-45t-45-19-45 19-19 45 19 45 45 19 45-19 19-45zm128-224v320q0 40-28 68t-68 28h-1472q-40 0-68-28t-28-68v-320q0-40 28-68t68-28h465l135 136q58 56 136 56t136-56l136-136h464q40 0 68 28t28 68zm-325-569q17 41-14 70l-448 448q-18 19-45 19t-45-19l-448-448q-31-29-14-70 17-39 59-39h256v-448q0-26 19-45t45-19h256q26 0 45 19t19 45v448h256q42 0 59 39z" fill="currentColor" fill-rule="evenodd"/></svg>
<svg style="left:752.45px;top:411.65px;color:#111" width="15.70" height="10.00" viewBox="0.0 64.0 576.0 384.0" preserveAspectRatio="none"><path d="M572.52 241.4C518.29 135.59 410.93 64 288 64S57.68 135.64 3.48 241.41a32.35 32.35 0 0 0 0 29.19C57.71 376.41 165.07 448 288 448s230.32-71.64 284.52-177.41a32.35 32.35 0 0 0 0-29.19zM288 400a144 144 0 1 1 144-144 143.93 143.93 0 0 1-144 144zm0-240a95.31 95.31 0 0 0-25.31 3.79 47.85 47.85 0 0 1-66.9 66.9A95.78 95.78 0 1 0 288 160z" fill="currentColor" fill-rule="evenodd"/></svg>
<svg style="left:752.45px;top:439.15px;color:#111" width="14.10" height="13.40" viewBox="0.0 149.0 1515.0 1515.0" preserveAspectRatio="none"><path d="M363 1536l91-91-235-235-91 91v107h128v128h107zm523-928q0-22-22-22-10 0-17 7l-542 542q-7 7-7 17 0 22 22 22 10 0 17-7l542-542q7-7 7-17zm-54-192l416 416-832 832h-416v-416zm683 96q0 53-37 90l-166 166-416-416 166-165q36-38 90-38 53 0 91 38l235 234q37 39 37 91z" fill="currentColor" fill-rule="evenodd"/></svg>
<svg style="left:752.75px;top:467.15px;color:#111" width="13.40" height="13.70" viewBox="-0.0 -0.0 512.0 512.0" preserveAspectRatio="none"><path d="M352.201 425.775l-79.196 79.196c-9.373 9.373-24.568 9.373-33.941 0l-79.196-79.196c-15.119-15.119-4.411-40.971 16.971-40.97h51.162L228 284H127.196v51.162c0 21.382-25.851 32.09-40.971 16.971L7.029 272.937c-9.373-9.373-9.373-24.569 0-33.941L86.225 159.8c15.119-15.119 40.971-4.411 40.971 16.971V228H228V127.196h-51.23c-21.382 0-32.09-25.851-16.971-40.971l79.196-79.196c9.373-9.373 24.568-9.373 33.941 0l79.196 79.196c15.119 15.119 4.411 40.971-16.971 40.971h-51.162V228h100.804v-51.162c0-21.382 25.851-32.09 40.97-16.971l79.196 79.196c9.373 9.373 9.373 24.569 0 33.941L425.773 352.2c-15.119 15.119-40.971 4.411-40.97-16.971V284H284v100.804h51.23c21.382 0 32.09 25.851 16.971 40.971z" fill="currentColor" fill-rule="evenodd"/></svg>
<svg style="left:752.45px;top:497.25px;color:#111" width="12.10" height="13.40" viewBox="0.0 0.0 448.0 512.0" preserveAspectRatio="none"><path d="M433.941 65.941l-51.882-51.882A48 48 0 0 0 348.118 0H176c-26.51 0-48 21.49-48 48v48H48c-26.51 0-48 21.49-48 48v320c0 26.51 21.49 48 48 48h224c26.51 0 48-21.49 48-48v-48h80c26.51 0 48-21.49 48-48V99.882a48 48 0 0 0-14.059-33.941zM266 464H54a6 6 0 0 1-6-6V150a6 6 0 0 1 6-6h74v224c0 26.51 21.49 48 48 48h96v42a6 6 0 0 1-6 6zm128-96H182a6 6 0 0 1-6-6V54a6 6 0 0 1 6-6h106v88c0 13.255 10.745 24 24 24h88v202a6 6 0 0 1-6 6zm6-256h-64V48h9.632c1.591 0 3.117.632 4.243 1.757l48.368 48.368a6 6 0 0 1 1.757 4.243V112z" fill="currentColor" fill-rule="evenodd"/></svg>
<svg style="left:752.45px;top:526.15px;color:#111" width="9.70" height="13.40" viewBox="0.0 0.0 384.0 512.0" preserveAspectRatio="none"><path d="M224 136V0H24C10.7 0 0 10.7 0 24v464c0 13.3 10.7 24 24 24h336c13.3 0 24-10.7 24-24V160H248c-13.2 0-24-10.8-24-24zm160-14.1v6.1H256V0h6.1c6.4 0 12.5 2.5 17 7l97.900 98c4.5 4.5 7 10.6 7 16.900z" fill="currentColor" fill-rule="evenodd"/></svg>
<svg style="left:752.45px;top:554.85px;color:#111" width="14.40" height="13.90" viewBox="0.0 -0.0 512.0 512.0" preserveAspectRatio="none"><path d="M512 176.001C512 273.203 433.202 352 336 352c-11.22 0-22.19-1.062-32.827-3.069l-24.012 27.014A23.999 23.999 0 0 1 261.223 384H224v40c0 13.255-10.745 24-24 24h-40v40c0 13.255-10.745 24-24 24H24c-13.255 0-24-10.745-24-24v-78.059c0-6.365 2.529-12.47 7.029-16.971l161.802-161.802C163.108 213.814 160 195.271 160 176 160 78.798 238.797.001 335.999 0 433.488-.001 512 78.511 512 176.001zM336 128c0 26.51 21.49 48 48 48s48-21.49 48-48-21.49-48-48-48-48 21.49-48 48z" fill="currentColor" fill-rule="evenodd"/></svg>
<svg style="left:753.15px;top:584.45px;color:#111" width="11.10" height="11.10" viewBox="110.0 366.0 1188.0 1188.0" preserveAspectRatio="none"><path d="M1298 1322q0 40-28 68l-136 136q-28 28-68 28t-68-28l-294-294-294 294q-28 28-68 28t-68-28l-136-136q-28-28-28-68t28-68l294-294-294-294q-28-28-28-68t28-68l136-136q28-28 68-28t68 28l294 294 294-294q28-28 68-28t68 28l136 136q28 28 28 68t-28 68l-294 294 294 294q28 28 28 68z" fill="currentColor" fill-rule="evenodd"/></svg>
<svg style="left:752.45px;top:612.05px;color:#111" width="14.00" height="13.70" viewBox="0 0 14.4 14.4" preserveAspectRatio="none"><path d="M9.2 0H14.4V5.2Z M0 9.2V14.4H5.2Z" fill="currentColor"/><path d="M12.9 1.5L8.5 5.9M1.5 12.9L5.9 8.5" stroke="currentColor" stroke-width="2.7" fill="none"/></svg>
<svg style="left:752.85px;top:641.90px;color:#111" width="12.20" height="12.00" viewBox="0 0 12.2 12.0" preserveAspectRatio="none"><path d="M6.2 1.7V6.0H10.5Z M1.7 6.1H6.0V10.4Z" fill="currentColor"/><path d="M11.9 0.3L7.7 4.5M0.3 11.8L4.5 7.6" stroke="currentColor" stroke-width="2.5" fill="none"/></svg>
</body></html>
